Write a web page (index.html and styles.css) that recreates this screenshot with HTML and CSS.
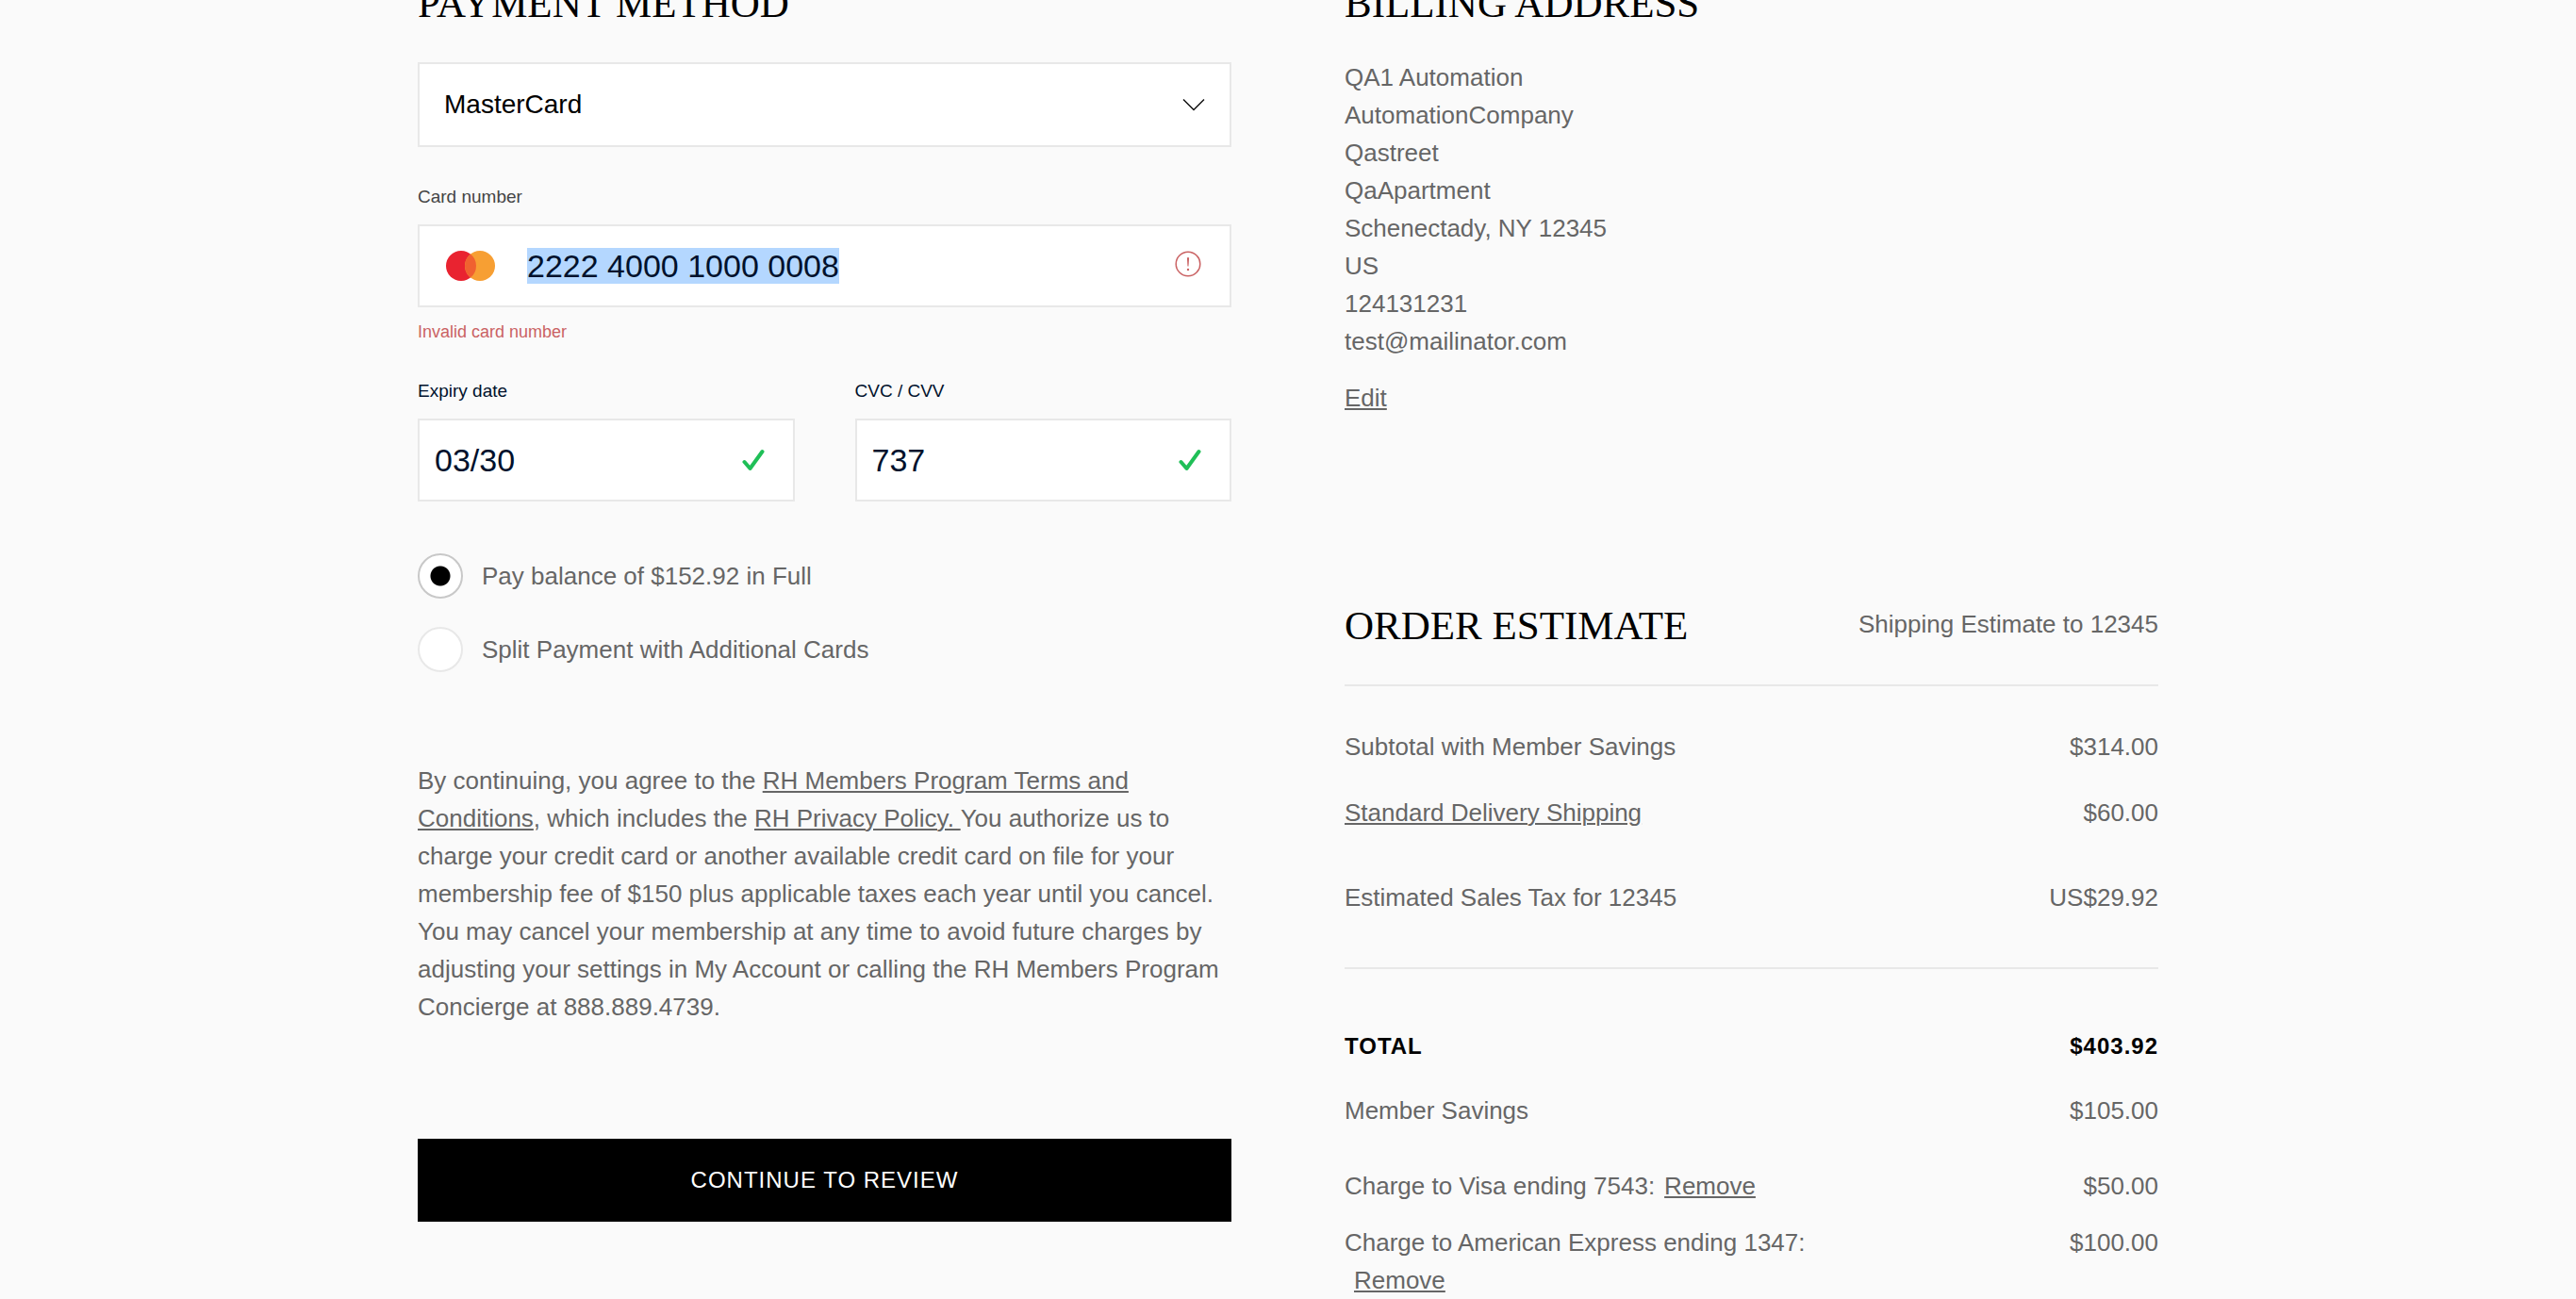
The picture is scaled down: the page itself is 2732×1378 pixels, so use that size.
FILE: index.html
```html
<!DOCTYPE html>
<html lang="en">
<head>
<meta charset="utf-8">
<meta name="viewport" content="width=device-width, initial-scale=1">
<title>Payment</title>
<link rel="stylesheet" href="styles.css">
</head>
<body>
<main class="checkout">
  <form class="payment">
    <h2 class="heading">PAYMENT METHOD</h2>
    <div class="box select-box">
      <select class="select" aria-label="Payment method">
        <option>MasterCard</option>
      </select>
      <svg class="chevron" viewBox="0 0 24 14" aria-hidden="true"><path d="M1 1.500L12 12.500L23 1.500"/></svg>
    </div>

    <div class="field">
      <label class="label label-muted" for="card">Card number</label>
      <div class="box card-box">
        <svg class="brand" viewBox="0 0 52 32" aria-hidden="true">
          <circle cx="16" cy="16" r="16" fill="#e92330"/>
          <circle cx="36" cy="16" r="16" fill="#f79f33"/>
          <path d="M26 3.500A16 16 0 0 1 26 28.500A16 16 0 0 1 26 3.500Z" fill="#f06130"/>
        </svg>
        <input class="input input-selected" id="card" type="text" value="2222 4000 1000 0008" aria-describedby="card-error">
        <svg class="alert" viewBox="0 0 28 28" aria-hidden="true">
          <circle cx="14" cy="14" r="12.800"/>
          <path d="M12.900 7.400Q14 6.400 15.100 7.400L14.500 16.500H13.500Z"/>
          <circle class="alert-dot" cx="14" cy="20" r="1.200"/>
        </svg>
      </div>
      <p class="error" id="card-error">Invalid card number</p>
    </div>

    <div class="pair">
      <div>
        <label class="label" for="expiry">Expiry date</label>
        <div class="box">
          <input class="input" id="expiry" type="text" value="03/30">
          <svg class="check" viewBox="0 0 24 24" aria-hidden="true"><path d="M2.500 14L8.500 21L21.500 3"/></svg>
        </div>
      </div>
      <div>
        <label class="label" for="cvc">CVC / CVV</label>
        <div class="box">
          <input class="input" id="cvc" type="text" value="737">
          <svg class="check" viewBox="0 0 24 24" aria-hidden="true"><path d="M2.500 14L8.500 21L21.500 3"/></svg>
        </div>
      </div>
    </div>

    <div class="options">
      <label class="option"><input class="radio" type="radio" name="split" checked>Pay balance of $152.92 in Full</label>
      <label class="option"><input class="radio" type="radio" name="split">Split Payment with Additional Cards</label>
    </div>

    <p class="terms">By continuing, you agree to the <a href="#">RH Members Program Terms and Conditions</a>, which includes the <a href="#">RH Privacy Policy. </a>You authorize us to charge your credit card or another available credit card on file for your membership fee of $150 plus applicable taxes each year until you cancel. You may cancel your membership at any time to avoid future charges by adjusting your settings in My Account or calling the RH Members Program Concierge at 888.889.4739.</p>

    <button class="submit" type="button">CONTINUE TO REVIEW</button>
  </form>

  <div class="summary">
    <section class="billing">
      <h2 class="heading">BILLING ADDRESS</h2>
      <address class="address">QA1 Automation<br>AutomationCompany<br>Qastreet<br>QaApartment<br>Schenectady, NY 12345<br>US<br>124131231<br>test@mailinator.com</address>
      <a class="edit" href="#">Edit</a>
    </section>

    <section>
      <header class="order-header">
        <h2 class="heading">ORDER ESTIMATE</h2>
        <p class="ship-to">Shipping Estimate to 12345</p>
      </header>
      <dl class="lines costs">
        <div class="line"><dt>Subtotal with Member Savings</dt><dd>$314.00</dd></div>
        <div class="line"><dt><a href="#">Standard Delivery Shipping</a></dt><dd>$60.00</dd></div>
        <div class="line tax"><dt>Estimated Sales Tax for 12345</dt><dd>US$29.92</dd></div>
      </dl>
      <dl class="lines totals">
        <div class="line total"><dt>TOTAL</dt><dd>$403.92</dd></div>
        <div class="line savings"><dt>Member Savings</dt><dd>$105.00</dd></div>
        <div class="line"><dt>Charge to Visa ending 7543:<a class="remove" href="#">Remove</a></dt><dd>$50.00</dd></div>
        <div class="line"><dt>Charge to American Express ending 1347:<a class="remove" href="#">Remove</a></dt><dd>$100.00</dd></div>
      </dl>
    </section>
  </div>
</main>
</body>
</html>
```
FILE: styles.css
```css
* {
  box-sizing: border-box;
}

body {
  margin: 0;
  background: #fafafa;
  color: #666;
  font: 26px/40px "Liberation Sans", Arial, sans-serif;
}

h2, p, dl, dd {
  margin: 0;
}

a {
  color: inherit;
  text-decoration: underline 2px;
  text-underline-offset: 2px;
}

/* The page is shown scrolled, with the section headings cut by the top edge. */
.checkout {
  display: grid;
  grid-template-columns: repeat(2, minmax(0, 1fr));
  gap: 120px;
  width: 100%;
  max-width: 1846px;
  margin: -20px auto 0;
}

.heading {
  color: #000;
  font: 43px/48px "Liberation Serif", "Times New Roman", serif;
}

/* Form fields */
.box {
  display: flex;
  align-items: center;
  height: 88px;
  padding: 0 30px 0 16px;
  border: 2px solid #e8e8e8;
  background: #fff;
}

.select-box {
  display: grid;
  height: 90px;
  margin-top: 38px;
  padding: 0;
}

.select {
  grid-area: 1 / 1;
  height: 100%;
  padding: 0 26px;
  border: 0;
  background: none;
  color: #000;
  font: inherit;
  font-size: 28px;
  appearance: none;
}

.chevron {
  grid-area: 1 / 1;
  justify-self: end;
  width: 24px;
  height: 14px;
  margin-right: 26px;
  fill: none;
  stroke: #111;
  stroke-width: 1.5;
  pointer-events: none;
}

.field {
  margin-top: 41px;
}

.label {
  display: block;
  margin-bottom: 17px;
  color: #00112c;
  font-size: 19px;
  line-height: 24px;
}

.label-muted {
  color: #444;
}

.card-box {
  padding: 0 30px 0 28px;
}

.brand {
  width: 52px;
  height: 32px;
  margin-right: 34px;
}

.input {
  flex: 1;
  min-width: 0;
  height: 38px;
  padding: 0;
  border: 0;
  background: none;
  color: #00112c;
  font: inherit;
  font-size: 34px;
  line-height: 38px;
}

.input-selected {
  flex: none;
  field-sizing: content;
  background: #b4d7ff;
}

.alert {
  width: 28px;
  height: 28px;
  margin: 0 0 4px auto;
  fill: none;
  stroke: #ca6263;
  stroke-width: 1.5;
}

.alert path,
.alert-dot {
  fill: #ca6263;
  stroke: none;
}

.error {
  margin-top: 14px;
  color: #ca6263;
  font-size: 18px;
  line-height: 24px;
}

.pair {
  display: grid;
  grid-template-columns: repeat(2, minmax(0, 1fr));
  gap: 64px;
  margin-top: 39px;
}

.check {
  width: 24px;
  height: 24px;
  fill: none;
  stroke: #1fbf57;
  stroke-width: 4;
  stroke-linecap: round;
  stroke-linejoin: round;
}

.options {
  display: grid;
  gap: 30px;
  margin-top: 55px;
}

.option {
  display: flex;
  align-items: center;
  gap: 20px;
}

.radio {
  width: 48px;
  height: 48px;
  margin: 0;
  border: 2px solid #e8e8e8;
  border-radius: 50%;
  background: #fff;
  appearance: none;
}

.radio:checked {
  border-color: #c8c8c8;
  background: radial-gradient(circle, #000 10px, #fff 11px);
}

.terms {
  margin-top: 95px;
}

.submit {
  display: block;
  width: 100%;
  height: 88px;
  margin-top: 120px;
  border: 0;
  background: #000;
  color: #fff;
  font: inherit;
  font-size: 24px;
  letter-spacing: 1px;
}

/* Billing and order summary */
.address {
  margin: 34px 0 20px;
  font-style: normal;
}

.edit {
  display: inline-block;
}

.order-header {
  display: flex;
  justify-content: space-between;
  align-items: flex-start;
  margin-top: 198px;
  padding-bottom: 38px;
  border-bottom: 2px solid #e8e8e8;
}

.ship-to {
  line-height: 44px;
}

.lines {
  display: flex;
  flex-direction: column;
}

.line {
  display: flex;
  justify-content: space-between;
}

.line dt {
  max-width: 60%;
}

.costs {
  gap: 30px;
  padding: 44px 0 54px;
  border-bottom: 2px solid #e8e8e8;
}

.tax {
  margin-top: 20px;
}

.totals {
  gap: 20px;
  padding-top: 62px;
}

.total {
  color: #000;
  font-size: 24px;
  font-weight: bold;
  letter-spacing: 1px;
}

.savings {
  margin: 8px 0 20px;
}

.remove {
  display: inline-block;
  margin-left: 10px;
}
```
